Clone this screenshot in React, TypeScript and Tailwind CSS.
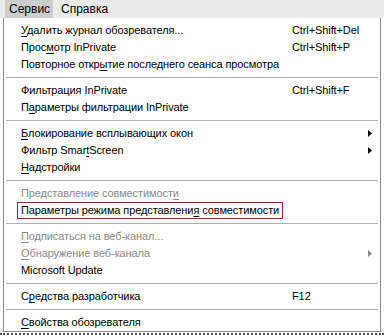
import React from "react";

type Item =
  | { sep: true }
  | {
      sep?: false;
      label: React.ReactNode;
      shortcut?: string;
      arrow?: boolean;
      disabled?: boolean;
      boxed?: boolean;
    };

const U = ({ children }: { children: React.ReactNode }) => <span className="underline underline-offset-2">{children}</span>;

const items: Item[] = [
  { label: <><U>У</U>далить журнал обозревателя...</>, shortcut: "Ctrl+Shift+Del" },
  { label: <>Прос<U>м</U>отр InPrivate</>, shortcut: "Ctrl+Shift+P" },
  { label: <>Повторное откр<U>ы</U>тие последнего сеанса просмотра</> },
  { sep: true },
  { label: <>Фильтрация InPrivate</>, shortcut: "Ctrl+Shift+F" },
  { label: <>П<U>а</U>раметры фильтрации InPrivate</> },
  { sep: true },
  { label: <><U>Б</U>локирование всплывающих окон</>, arrow: true },
  { label: <>Фильтр Smar<U>t</U>Screen</>, arrow: true },
  { label: <><U>Н</U>адстройки</> },
  { sep: true },
  { label: <>Представление совместимост<U>и</U></>, disabled: true },
  { label: <>Параметры режима представлени<U>я</U> совместимости</>, boxed: true },
  { sep: true },
  { label: <><U>П</U>одписаться на веб-канал...</>, disabled: true },
  { label: <><U>О</U>бнаружение веб-канала</>, disabled: true, arrow: true },
  { label: <>Microsoft Update</> },
  { sep: true },
  { label: <>С<U>р</U>едства разработчика</>, shortcut: "F12" },
  { sep: true },
  { label: <><U>С</U>войства обозревателя</> },
];

const Arrow = ({ gray }: { gray?: boolean }) => (
  <svg width="4" height="7" viewBox="0 0 4 7">
    <path d="M0 0 L4 3.5 L0 7 Z" fill={gray ? "#8a8a8a" : "#000"} />
  </svg>
);

export default function App() {
  return (
    <div
      className="w-[384px] h-[336px] overflow-hidden bg-white text-[11px] tracking-[-0.1px] text-black"
      style={{ fontFamily: '"Liberation Sans", Arial, sans-serif' }}
    >
      <div className="h-[18px] bg-[#ebebeb] flex items-stretch pl-[5px] text-[12px] tracking-normal">
        <div className="px-[4px] bg-[#cdcdcd] flex items-center w-[48px]">Сервис</div>
        <div className="px-[8px] flex items-center">Справка</div>
      </div>
      <div className="flex">
        <div className="w-[3px] bg-white" />
        <div className="w-[378px] h-[314px] border-l border-r border-b border-[#8c8c8c] bg-white pt-[4px] flex flex-col">
          {items.map((it, i) =>
            it.sep ? (
              <div key={i} className="h-[9px] flex items-center px-[2px]">
                <div className="h-px w-full bg-[#b0b0b0]" />
              </div>
            ) : (
              <div
                key={i}
                className={`h-[17px] flex items-center ${it.disabled ? "text-[#8a8a8a]" : ""}`}
              >
                <div className="w-[271px] pl-[13px] flex items-center">
                  <span
                    className={`leading-[15px] px-[3px] whitespace-nowrap ${it.boxed ? "border border-[#c8102e]" : "border border-transparent"}`}
                  >
                    {it.label}
                  </span>
                </div>
                <div className="flex-1 pl-[17px] whitespace-nowrap">{it.shortcut}</div>
                <div className="w-[12px] flex items-center">{it.arrow && <Arrow gray={it.disabled} />}</div>
              </div>
            )
          )}
        </div>
      </div>
      <div className="mt-[1px] h-[2px] border-t-2 border-dotted border-[#555] mx-0" />
    </div>
  );
}
